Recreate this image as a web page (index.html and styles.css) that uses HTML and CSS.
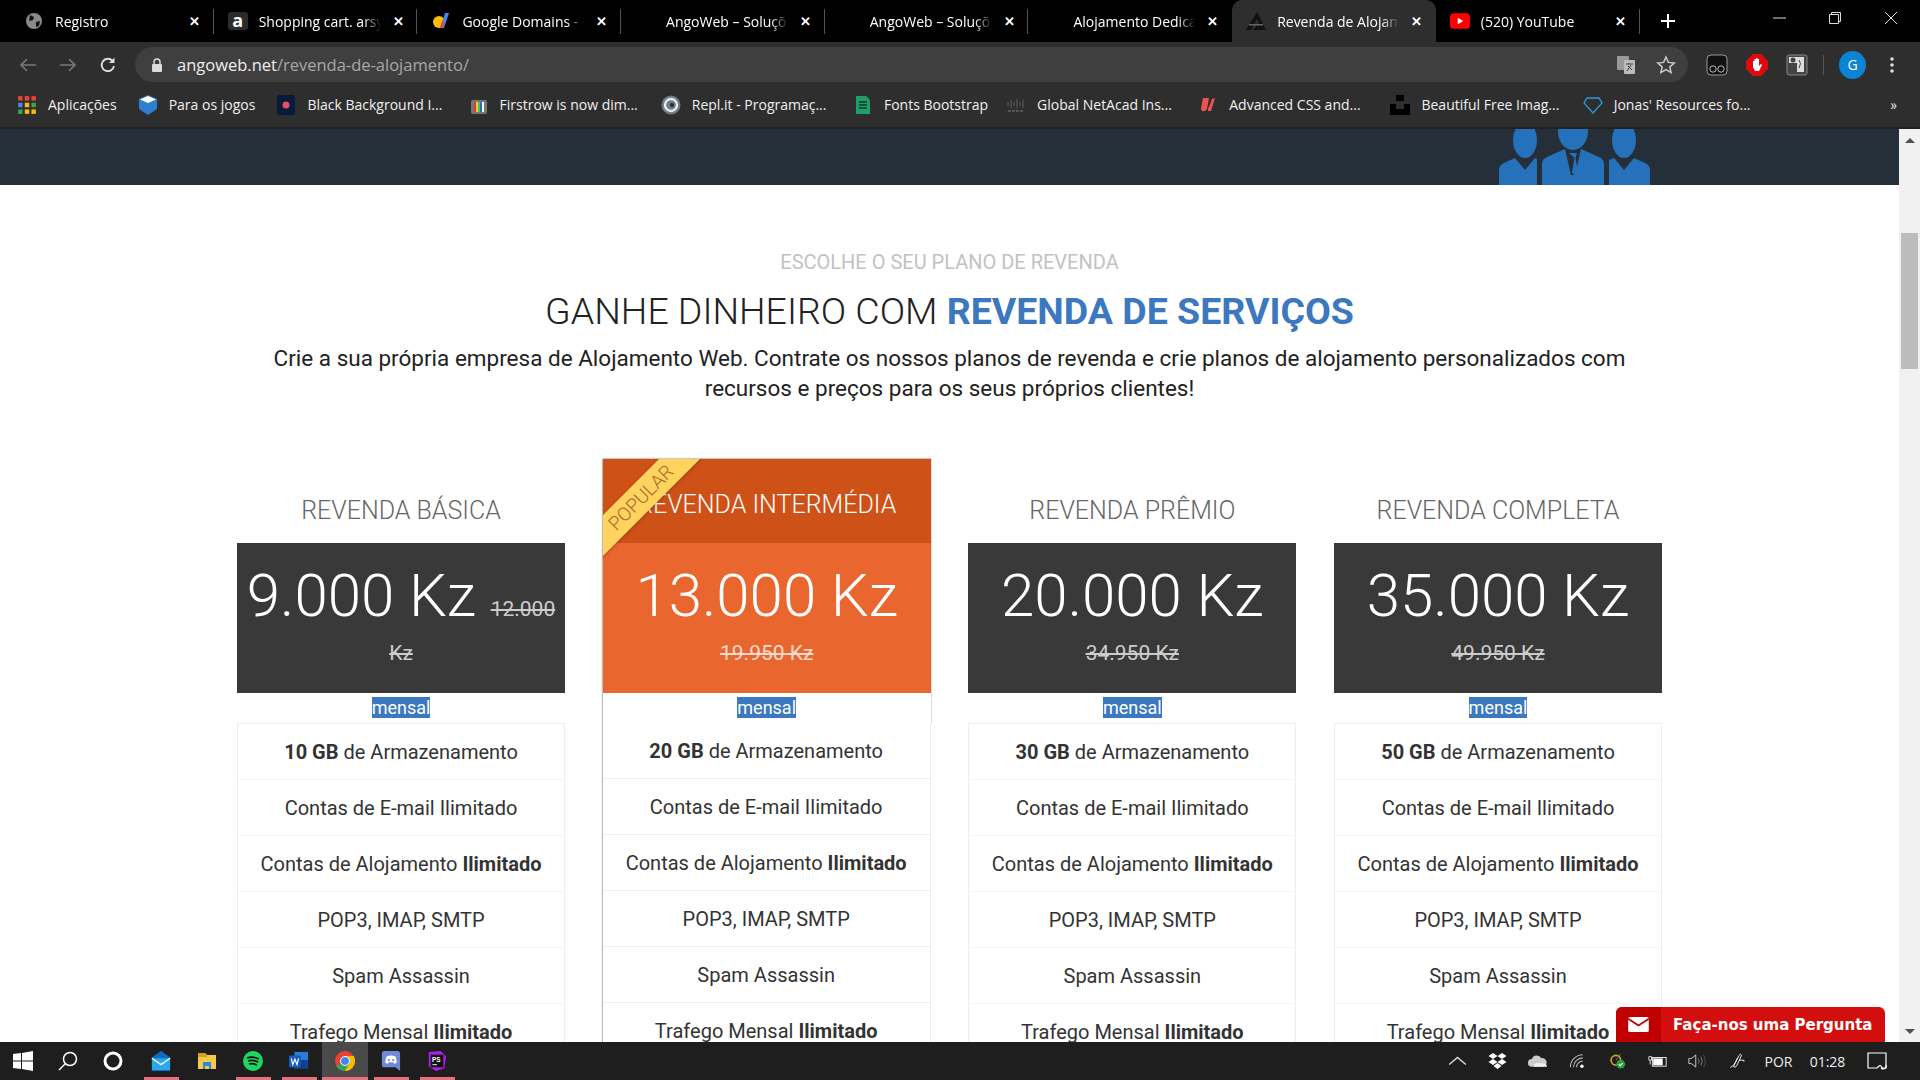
FILE: index.html
```html
<!DOCTYPE html>
<html lang="pt">
<head>
    <meta charset="UTF-8">
    <title>Revenda de Alojamento - AngoWeb</title>
    <link rel="stylesheet" href="styles.css">
</head>
<body>
    <div class="tabstrip">
        <div class="tab">
            <svg class="tab-icon" viewBox="0 0 18 18"><circle cx="9" cy="9" r="8" fill="#8a8a8a"/><path d="M5 3l4 2-1 3-4 1zM11 10l4-1-1 5-3 1z" fill="#111"/></svg>
            <span class="tab-title">Registro</span><span class="tab-close">✕</span>
        </div>
        <div class="tab">
            <span class="tab-icon fav-a">a</span>
            <span class="tab-title">Shopping cart. arsyad</span><span class="tab-close">✕</span>
        </div>
        <div class="tab">
            <svg class="tab-icon" viewBox="0 0 18 18"><circle cx="7" cy="10" r="6" fill="#fbbc04"/><path d="M8 16L13 1h4l-5 15z" fill="#4285f4"/><path d="M8 16l2.500-8 1.500 3-1 5z" fill="#ea4335"/></svg>
            <span class="tab-title">Google Domains - Go</span><span class="tab-close">✕</span>
        </div>
        <div class="tab">
            <span class="tab-icon"></span>
            <span class="tab-title">AngoWeb – Soluções</span><span class="tab-close">✕</span>
        </div>
        <div class="tab">
            <span class="tab-icon"></span>
            <span class="tab-title">AngoWeb – Soluções</span><span class="tab-close">✕</span>
        </div>
        <div class="tab tab-before-active">
            <span class="tab-icon"></span>
            <span class="tab-title">Alojamento Dedicado</span><span class="tab-close">✕</span>
        </div>
        <div class="tab tab-active">
            <svg class="tab-icon" viewBox="0 0 20 18"><path d="M11 0L0 18h5L11 7l2 4-6 7h13z" fill="#111"/><path d="M3 12h14v1.500H3z" fill="#666"/></svg>
            <span class="tab-title">Revenda de Alojamento</span><span class="tab-close">✕</span>
        </div>
        <div class="tab">
            <svg class="tab-icon" viewBox="0 0 18 14"><rect width="18" height="14" rx="3.500" fill="#f00"/><path d="M7 4l5 3-5 3z" fill="#fff"/></svg>
            <span class="tab-title">(520) YouTube</span><span class="tab-close">✕</span>
        </div>
        <svg class="new-tab" viewBox="0 0 16 16"><path d="M8 1v14M1 8h14" stroke="#fff" stroke-width="2"/></svg>
        <div class="window-buttons">
            <svg viewBox="0 0 14 14"><path d="M1 7h13" stroke="#ddd"/></svg>
            <svg viewBox="0 0 14 14"><path d="M1.500 3.500h9v9h-9zM3.500 3.500v-2h9v9h-2" fill="none" stroke="#ddd"/></svg>
            <svg viewBox="0 0 14 14"><path d="M1 1l12 12M13 1L1 13" stroke="#ddd"/></svg>
        </div>
    </div>

    <div class="toolbar">
        <svg class="nav-icon" viewBox="0 0 18 18"><path d="M17 9H2M8 3L2 9l6 6" fill="none" stroke="#777" stroke-width="1.600"/></svg>
        <svg class="nav-icon" viewBox="0 0 18 18"><path d="M1 9h15M10 3l6 6-6 6" fill="none" stroke="#777" stroke-width="1.600"/></svg>
        <svg class="nav-icon" viewBox="0 0 18 18"><path d="M15 10a6.200 6.200 0 1 1-1.500-5.200" fill="none" stroke="#ddd" stroke-width="1.800"/><path d="M15.500 1.500v5.500H10z" fill="#ddd"/></svg>
        <div class="omnibox">
            <svg class="lock" viewBox="0 0 12 14"><path d="M3 6V4a3 3 0 0 1 6 0v2" fill="none" stroke="#ddd" stroke-width="1.400"/><rect x="1" y="6" width="10" height="8" rx="1" fill="#ddd"/></svg>
            <span class="url"><b>angoweb.net</b>/revenda-de-alojamento/</span>
            <svg class="omni-icon" viewBox="0 0 20 20"><rect x="1" y="1" width="12" height="14" rx="1" fill="#999"/><rect x="8" y="5" width="11" height="14" rx="1" fill="#bbb"/><path d="M10 9h7M13 8v1M11 16l4-6M12 11l4 4" stroke="#444" fill="none"/></svg>
            <svg class="omni-icon omni-star" viewBox="0 0 20 20"><path d="M10 2l2.400 5.400 5.800.6-4.400 3.900 1.300 5.700L10 14.700l-5.100 2.900 1.300-5.700L1.800 8l5.800-.6z" fill="none" stroke="#ccc" stroke-width="1.500"/></svg>
        </div>
        <svg class="ext" viewBox="0 0 22 22"><rect x="1" y="1" width="20" height="20" rx="4" fill="#111" stroke="#999"/><circle cx="7" cy="15" r="3.200" fill="none" stroke="#bbb"/><circle cx="15" cy="15" r="3.200" fill="none" stroke="#bbb"/></svg>
        <svg class="ext" viewBox="0 0 22 22"><path d="M7 0h8l7 7v8l-7 7H7l-7-7V7z" fill="#e2090d"/><path d="M7 13V7h1.500v4V5h1.500v6V4h1.500v7V5H13v7l2-2 1 1-3 6H9z" fill="#fff"/></svg>
        <svg class="ext" viewBox="0 0 22 22"><rect x="1" y="1" width="20" height="20" rx="2" fill="#444" stroke="#888"/><path d="M3 3h15v15h-7V9H3z" fill="#ddd"/><circle cx="7" cy="6" r="2.500" fill="#444"/><path d="M13 6q3 3 0 8" fill="none" stroke="#444"/></svg>
        <span class="toolbar-sep"></span>
        <span class="avatar">G</span>
        <svg class="kebab" viewBox="0 0 4 18"><circle cx="2" cy="3" r="1.800" fill="#ddd"/><circle cx="2" cy="9" r="1.800" fill="#ddd"/><circle cx="2" cy="15" r="1.800" fill="#ddd"/></svg>
    </div>

    <div class="bookmarks">
        <a class="bm">
            <svg viewBox="0 0 18 18"><path d="M1 1h4v4H1z" fill="#ea4335"/><path d="M7 1h4v4H7z" fill="#ea4335"/><path d="M13 1h4v4h-4z" fill="#ea4335"/><path d="M1 7h4v4H1z" fill="#4285f4"/><path d="M7 7h4v4H7z" fill="#fbbc04"/><path d="M13 7h4v4h-4z" fill="#34a853"/><path d="M1 13h4v4H1z" fill="#34a853"/><path d="M7 13h4v4H7z" fill="#fbbc04"/><path d="M13 13h4v4h-4z" fill="#fbbc04"/></svg>
            Aplicações
        </a>
        <a class="bm">
            <svg viewBox="0 0 20 20"><path d="M10 0l9 4v10l-9 6-9-6V4z" fill="#2f7fd1"/><path d="M10 1l8 3.500-8 3.500-8-3.500z" fill="#fff"/></svg>
            Para os jogos
        </a>
        <a class="bm bm-long">
            <svg viewBox="0 0 20 20"><rect x="1" y="0" width="18" height="20" rx="2" fill="#0a1a3a"/><circle cx="10" cy="10" r="3.500" fill="#e8506a"/></svg>
            Black Background I...
        </a>
        <a class="bm bm-long">
            <svg viewBox="0 0 20 20"><rect x="2" y="5" width="16" height="14" rx="2" fill="#777"/><path d="M5 7h2v10H5z" fill="#e33"/><path d="M7 7h2v10H7z" fill="#fc3"/><path d="M9 7h2v10H9z" fill="#3c6"/><path d="M11 7h2v10h-2z" fill="#36c"/><path d="M13 7h2v10h-2z" fill="#fff"/></svg>
            Firstrow is now dim...
        </a>
        <a class="bm bm-long">
            <svg viewBox="0 0 20 20"><circle cx="10" cy="10" r="9.500" fill="#6f7c85"/><circle cx="10" cy="10" r="6" fill="none" stroke="#e8ecef" stroke-width="2.400"/><circle cx="11" cy="10" r="2" fill="#2a2a2a"/></svg>
            Repl.it - Programaç...
        </a>
        <a class="bm bm-tight">
            <svg viewBox="0 0 20 20"><path d="M3 1h10l4 4v14H3z" fill="#1f9d6b"/><path d="M6 7h8M6 10h8M6 13h8" stroke="#0d3b2a" stroke-width="1.500"/></svg>
            Fonts Bootstrap
        </a>
        <a class="bm bm-long">
            <svg viewBox="0 0 20 20"><path d="M2 7v4M5 5v8M8 7v4M11 4v9M14 7v4M17 5v8" stroke="#555" stroke-width="1.300"/><path d="M2 16h16" stroke="#555" stroke-width="2" stroke-dasharray="3 1"/></svg>
            Global NetAcad Ins...
        </a>
        <a class="bm bm-long">
            <svg viewBox="0 0 20 20"><path d="M5 3L3 13q0 4 4 3l3-3 0 3h3l4-13-3 1-3 8-2 2 2-11z" fill="#ec5252"/></svg>
            Advanced CSS and...
        </a>
        <a class="bm bm-long">
            <svg viewBox="0 0 20 20"><path d="M6 0h8v6H6zM0 9h6v5h8V9h6v11H0z" fill="#000"/></svg>
            Beautiful Free Imag...
        </a>
        <a class="bm bm-long">
            <svg viewBox="0 0 20 20"><path d="M4 3h12l3 5-9 10L1 8z" fill="none" stroke="#2d9cdb" stroke-width="1.300"/></svg>
            Jonas' Resources fo...
        </a>
        <span class="bm-more">»</span>
    </div>
    <div class="chrome-line"></div>

    <div class="viewport">
        <main class="page">
            <div class="hero">
                <svg class="hero-people" viewBox="0 0 152 56">
                    <ellipse cx="26" cy="11" rx="12" ry="18" fill="#2671bc"/>
                    <path d="M0 56V41q0-5 5-7l11-5 10 12 10-12 2 1v26z" fill="#2671bc"/>
                    <ellipse cx="74" cy="2" rx="15" ry="19" fill="#2671bc"/>
                    <path d="M43 56V35q0-5 5-7l18-8 6 26h4l6-26 18 8q5 2 5 7v21z" fill="#2671bc"/>
                    <path d="M70 24h8l-1.500 5 2.500 14-3 4-3-4 2.500-14z" fill="#2671bc"/>
                    <ellipse cx="125" cy="11" rx="12" ry="18" fill="#2671bc"/>
                    <path d="M110 56V31l5-2 10 12 10-12 11 5q5 2 5 7v15z" fill="#2671bc"/>
                </svg>
            </div>

            <section class="pricing">
                <p class="kicker">ESCOLHE O SEU PLANO DE REVENDA</p>
                <h2 class="heading">GANHE DINHEIRO COM <strong>REVENDA DE SERVIÇOS</strong></h2>
                <p class="lead">Crie a sua própria empresa de Alojamento Web. Contrate os nossos planos de revenda e crie planos de alojamento personalizados com recursos e preços para os seus próprios clientes!</p>

                <div class="plans">
                    <article class="plan">
                        <h3 class="plan-title">REVENDA BÁSICA</h3>
                        <div class="plan-price"><span class="now">9.000 Kz </span><s>12.000 Kz</s></div>
                        <div class="plan-period"><span>mensal</span></div>
                        <ul class="plan-list">
                            <li><b>10 GB</b> de Armazenamento</li>
                            <li>Contas de E-mail Ilimitado</li>
                            <li>Contas de Alojamento <b>Ilimitado</b></li>
                            <li>POP3, IMAP, SMTP</li>
                            <li>Spam Assassin</li>
                            <li>Trafego Mensal <b>Ilimitado</b></li>
                        </ul>
                    </article>
                    <article class="plan plan-popular">
                        <h3 class="plan-title">REVENDA INTERMÉDIA</h3>
                        <div class="ribbon"><span>POPULAR</span></div>
                        <div class="plan-price"><span class="now">13.000 Kz </span><s>19.950 Kz</s></div>
                        <div class="plan-period"><span>mensal</span></div>
                        <ul class="plan-list">
                            <li><b>20 GB</b> de Armazenamento</li>
                            <li>Contas de E-mail Ilimitado</li>
                            <li>Contas de Alojamento <b>Ilimitado</b></li>
                            <li>POP3, IMAP, SMTP</li>
                            <li>Spam Assassin</li>
                            <li>Trafego Mensal <b>Ilimitado</b></li>
                        </ul>
                    </article>
                    <article class="plan">
                        <h3 class="plan-title">REVENDA PRÊMIO</h3>
                        <div class="plan-price"><span class="now">20.000 Kz </span><s>34.950 Kz</s></div>
                        <div class="plan-period"><span>mensal</span></div>
                        <ul class="plan-list">
                            <li><b>30 GB</b> de Armazenamento</li>
                            <li>Contas de E-mail Ilimitado</li>
                            <li>Contas de Alojamento <b>Ilimitado</b></li>
                            <li>POP3, IMAP, SMTP</li>
                            <li>Spam Assassin</li>
                            <li>Trafego Mensal <b>Ilimitado</b></li>
                        </ul>
                    </article>
                    <article class="plan">
                        <h3 class="plan-title">REVENDA COMPLETA</h3>
                        <div class="plan-price"><span class="now">35.000 Kz </span><s>49.950 Kz</s></div>
                        <div class="plan-period"><span>mensal</span></div>
                        <ul class="plan-list">
                            <li><b>50 GB</b> de Armazenamento</li>
                            <li>Contas de E-mail Ilimitado</li>
                            <li>Contas de Alojamento <b>Ilimitado</b></li>
                            <li>POP3, IMAP, SMTP</li>
                            <li>Spam Assassin</li>
                            <li>Trafego Mensal <b>Ilimitado</b></li>
                        </ul>
                    </article>
                </div>
            </section>

            <a class="ask">
                <span class="ask-icon"><svg viewBox="0 0 22 16"><rect width="22" height="16" rx="2" fill="#fff"/><path d="M0 2l11 7 11-7" fill="none" stroke="#c00000" stroke-width="2"/></svg></span>
                <span class="ask-text">Faça-nos uma Pergunta</span>
            </a>
        </main>
        <div class="scrollbar">
            <span class="arrow-up"></span>
            <span class="thumb"></span>
            <span class="arrow-down"></span>
        </div>
    </div>

    <footer class="taskbar">
        <div class="task start"><svg viewBox="0 0 20 20"><path d="M0 3l8-1v7.500H0zM9 2l11-2v9.500H9zM0 10.500h8V18l-8-1zM9 10.500h11V20L9 18z" fill="#fff"/></svg></div>
        <div class="task"><svg viewBox="0 0 20 20"><circle cx="12" cy="8" r="6.500" fill="none" stroke="#fff" stroke-width="1.500"/><path d="M7.500 12.500L1 19" stroke="#fff" stroke-width="1.500"/></svg></div>
        <div class="task"><svg viewBox="0 0 20 20"><circle cx="10" cy="10" r="8" fill="none" stroke="#fff" stroke-width="3"/></svg></div>
        <div class="task task-first-app running"><svg viewBox="0 0 22 22"><path d="M11 0l10 7v15H1V7z" fill="#0f6cbd"/><path d="M1 8h20v13H1z" fill="#29a9eb"/><path d="M1 8l10 7 10-7" fill="none" stroke="#fff" stroke-width="1.500"/></svg></div>
        <div class="task"><svg viewBox="0 0 20 20"><path d="M1 2h7l2 2h9v14H1z" fill="#f7c948"/><path d="M1 2h7l2 2v2H1z" fill="#d69e1e"/><path d="M6 11h8v7h-2v-3H8v3H6z" fill="#2b88d8"/></svg></div>
        <div class="task running"><svg viewBox="0 0 20 20"><circle cx="10" cy="10" r="10" fill="#1ed760"/><path d="M4 7q6-2 12 1M5 10q5-1.500 10 1M6 13q4-1 8 1" fill="none" stroke="#111" stroke-width="1.800"/></svg></div>
        <div class="task running"><svg viewBox="0 0 22 20"><path d="M6 0h15v18H6z" fill="#2b7cd3"/><path d="M6 9h15v9H6z" fill="#103f91"/><rect x="0" y="4" width="13" height="13" fill="#185abd"/><path d="M2.500 7l1.700 7 2.300-6 2.300 6L10.500 7" fill="none" stroke="#fff" stroke-width="1.300"/></svg></div>
        <div class="task task-active running"><svg viewBox="0 0 20 20"><circle cx="10" cy="10" r="10" fill="#ea4335"/><path d="M10 10L1.300 15A10 10 0 0 0 10 20l5-9z" fill="#34a853"/><path d="M10 5h8.700A10 10 0 0 1 10 20l5-9z" fill="#fbbc04"/><circle cx="10" cy="10" r="4.500" fill="#4285f4" stroke="#fff"/></svg></div>
        <div class="task running"><svg viewBox="0 0 20 22"><path d="M3 0h14a3 3 0 0 1 3 3v19l-5-4H3a3 3 0 0 1-3-3V3a3 3 0 0 1 3-3z" fill="#7289da"/><path d="M5 6q5-2 10 0l1.500 6q-1 1.500-3 2l-1-1.500h-5l-1 1.500q-2-.5-3-2z" fill="#fff"/><circle cx="7.700" cy="10" r="1.200" fill="#7289da"/><circle cx="12.300" cy="10" r="1.200" fill="#7289da"/></svg></div>
        <div class="task running"><svg viewBox="0 0 22 22"><path d="M2 1l13-1 6 6-2 13-9 3-8-5z" fill="#af1df5"/><rect x="4" y="4" width="14" height="14" fill="#111"/><text x="5.500" y="12" class="ps-mark">PS</text><path d="M6 15h5" stroke="#fff"/></svg></div>

        <div class="tray">
            <span class="tray-cell"><svg viewBox="0 0 16 8"><path d="M1 7l7-6 7 6" fill="none" stroke="#ddd" stroke-width="1.200"/></svg></span>
            <span class="tray-cell"><svg viewBox="0 0 18 16"><path d="M4.500 0L0 3l4.500 3L9 3zM13.500 0L9 3l4.500 3L18 3zM4.500 6L0 9l4.500 3L9 9zM13.500 6L9 9l4.500 3L18 9zM9 10l-4 3 4 3 4-3z" fill="#fff"/></svg></span>
            <span class="tray-cell"><svg viewBox="0 0 20 12"><path d="M4 12a4 4 0 0 1 0-8 5.500 5.500 0 0 1 10-1 4.500 4.500 0 0 1 2 9z" fill="#ccc"/><path d="M6 12q0-4 4-4t8 1q2 1 2 3z" fill="#eee"/></svg></span>
            <span class="tray-cell"><svg viewBox="0 0 18 18"><path d="M1 16a14 14 0 0 1 14-14M4.500 16A10.500 10.500 0 0 1 15 5.500M8 16a7 7 0 0 1 7-7" fill="none" stroke="#bbb" stroke-width="1.200"/><circle cx="14" cy="15" r="2" fill="#fff"/></svg></span>
            <span class="tray-cell"><svg viewBox="0 0 20 20"><circle cx="8" cy="9" r="6" fill="none" stroke="#d9a520" stroke-width="2"/><circle cx="14" cy="14" r="5.500" fill="#2e9e3e"/><path d="M11.500 14l2 2 3-3.500" fill="none" stroke="#fff" stroke-width="1.400"/><path d="M8 9l6-8" stroke="#888"/></svg></span>
            <span class="tray-cell"><svg viewBox="0 0 22 14"><rect x="5" y="3" width="16" height="10" fill="none" stroke="#fff"/><rect x="6" y="4" width="11" height="8" fill="#fff"/><path d="M1 2v4h3V2zM2.500 6v5" stroke="#fff"/></svg></span>
            <span class="tray-cell"><svg viewBox="0 0 22 18"><path d="M1 6h3l5-4v14l-5-4H1z" fill="none" stroke="#ddd"/><path d="M12 6q2 3 0 6M15 4q3 5 0 10" fill="none" stroke="#888"/><path d="M18 2q4 7 0 14" fill="none" stroke="#555"/></svg></span>
            <span class="tray-cell"><svg viewBox="0 0 20 20"><path d="M1 18q4-1 7-7l4-8q2-3 3 0l-6 13q-2 3-4 1l5-11 M12 9h6v2" fill="none" stroke="#eee" stroke-width="1.200"/></svg></span>
            <span class="tray-lang">POR</span>
            <span class="tray-time">01:28</span>
            <span class="tray-notif"><svg viewBox="0 0 20 18"><path d="M1 1h18v15h-4q-1-4-4-1l-1 1H1z" fill="none" stroke="#fff" stroke-width="1.200"/><path d="M14 16a3 3 0 0 0 5-3" fill="none" stroke="#fff" stroke-width="1.200"/></svg></span>
        </div>
    </footer>
</body>
</html>
```

FILE: styles.css
```css
* {
    box-sizing: border-box;
}
html, body {
    height: 100%;
}
body {
    margin: 0;
    display: flex;
    flex-direction: column;
    overflow: hidden;
    font-family: Roboto, "Liberation Sans", sans-serif;
    background: #fff;
}

/* browser chrome */
.tabstrip {
    height: 42px;
    flex: none;
    display: flex;
    align-items: center;
    padding-left: 10px;
    background: #000;
}
.tab {
    width: 203.7px;
    height: 42px;
    flex: none;
    display: flex;
    align-items: center;
    padding-left: 14px;
    position: relative;
    color: #fff;
    font: 14px "Open Sans", sans-serif;
}
.tab::after {
    content: "";
    position: absolute;
    right: 0;
    top: 9px;
    height: 25px;
    width: 1px;
    background: #555;
}
.tab-before-active::after, .tab-active::after {
    display: none;
}
.tab-active {
    background: #2e2e2e;
    border-radius: 10px 10px 0 0;
}
.tab-icon {
    width: 20px;
    height: 18px;
    flex: none;
}
.fav-a {
    display: block;
    background: #2b2b2b;
    border-radius: 3px;
    font: 700 18px/16px "Open Sans", sans-serif;
    text-align: center;
}
.tab-title {
    width: 122px;
    margin-left: 11px;
    flex: none;
    overflow: hidden;
    white-space: nowrap;
    -webkit-mask-image: linear-gradient(to right, #000 86%, transparent);
}
.tab-close {
    margin-left: 12px;
    font-size: 13px;
    font-weight: 700;
}
.new-tab {
    width: 16px;
    height: 16px;
    margin-left: 20px;
}
.window-buttons {
    margin-left: auto;
    display: flex;
    align-items: center;
    gap: 42px;
    padding: 0 22px 6px 0;
}
.window-buttons svg {
    width: 14px;
    height: 14px;
}

.toolbar {
    height: 45px;
    flex: none;
    display: flex;
    align-items: center;
    padding: 0 0 0 19px;
    background: #2e2e2e;
}
.nav-icon {
    width: 18px;
    height: 18px;
    margin-right: 22px;
}
.omnibox {
    width: 1553px;
    height: 35px;
    margin-left: -4px;
    display: flex;
    align-items: center;
    padding: 0 12px 0 16px;
    border-radius: 18px;
    background: #3f3f3f;
}
.lock {
    width: 12px;
    height: 14px;
}
.url {
    margin-left: 14px;
    color: #a8a8a8;
    font: 16.5px "Open Sans", sans-serif;
}
.url b {
    font-weight: 400;
    color: #eee;
}
.omni-icon {
    width: 20px;
    height: 20px;
    margin-left: auto;
}
.omni-star {
    margin-left: 20px;
}
.ext {
    width: 22px;
    height: 22px;
    margin-left: 18px;
}
.omnibox + .ext {
    margin-left: 18px;
}
.toolbar-sep {
    width: 1px;
    height: 20px;
    margin: 0 15px 0 15px;
    background: #555;
}
.avatar {
    width: 27px;
    height: 28px;
    border-radius: 50%;
    background: #0b84d4;
    color: #fff;
    font: 14px/28px "Open Sans", sans-serif;
    text-align: center;
}
.kebab {
    width: 4px;
    height: 18px;
    margin-left: 24px;
}

.bookmarks {
    height: 40px;
    flex: none;
    display: flex;
    align-items: center;
    padding: 0 0 5px 17px;
    background: #2e2e2e;
}
.bm {
    display: flex;
    align-items: center;
    margin-right: 21px;
    color: #f0f0f0;
    font: 14px "Open Sans", sans-serif;
    white-space: nowrap;
}
.bm-long {
    width: 192.2px;
    margin-right: 0;
}
.bm-tight {
    margin-right: 18px;
}
.bm svg {
    width: 20px;
    height: 20px;
    margin-right: 11px;
    flex: none;
}
.bm-more {
    margin-left: auto;
    padding-right: 23px;
    color: #ddd;
    font-size: 15px;
}
.chrome-line {
    height: 2px;
    flex: none;
    background: #222;
}

/* page */
.viewport {
    flex: 1;
    min-height: 0;
    display: flex;
}
.page {
    flex: 1;
    min-width: 0;
    overflow: hidden;
    position: relative;
}
.hero {
    height: 56px;
    padding-left: 1499px;
    background: #242f39;
}
.hero-people {
    display: block;
    width: 152px;
    height: 56px;
}
.pricing {
    text-align: center;
    padding-top: 66px;
}
.kicker {
    margin: 0;
    color: #c2c2c2;
    font-size: 20px;
    line-height: 22px;
}
.heading {
    margin: 16px 0 0;
    color: #222;
    font-size: 37.5px;
    line-height: 44px;
    font-weight: 300;
}
.heading strong {
    font-weight: 700;
    color: #3b78c0;
}
.lead {
    width: 1380px;
    margin: 9.5px auto 0;
    color: #222;
    font-size: 22.5px;
    line-height: 30px;
}
.plans {
    margin-top: 56px;
    display: grid;
    grid-template-columns: repeat(4, 328px);
    column-gap: 37.67px;
    justify-content: center;
}
.plan {
    position: relative;
}
.plan-title {
    height: 84px;
    margin: 0;
    padding-top: 36px;
    color: #666;
    font-size: 25px;
    line-height: 32px;
    font-weight: 300;
}
.plan-price {
    height: 150px;
    padding: 8px 6px 0;
    background: #393939;
    color: #ccc;
    font-size: 21px;
    line-height: 26px;
}
.now {
    color: #fff;
    font-size: 60px;
    line-height: 89px;
    font-weight: 300;
}
.plan-period {
    height: 30px;
    padding-top: 4px;
    font-size: 18px;
    line-height: 21px;
}
.plan-period span {
    display: inline-block;
    background: #3b78c0;
    color: #fff;
}
.plan-list {
    margin: 0;
    padding: 0;
    list-style: none;
    border: 1px solid #eee;
    border-bottom: 0;
}
.plan-list li {
    height: 56px;
    border-bottom: 1px solid #f6f6f6;
    color: #333;
    font-size: 20px;
    line-height: 57px;
}
.plan-list b {
    font-weight: 700;
}
.plan-popular {
    box-shadow: -1px 0 1px #bbb, 1px 0 0 #ddd, 0 -1px 1px #ccc;
}
.plan-popular .plan-title {
    padding-top: 30px;
    background: #ce5118;
    color: #fff;
}
.plan-popular .plan-price {
    background: #e9672e;
    color: #f4d9cc;
}
.plan-popular .plan-list {
    border-top: 0;
    border-left: 0;
    border-right: 1px solid #eee;
    background: #fff;
    box-shadow: 2px 0 0 #fff;
}
.plan-popular .plan-list li {
    border-bottom-color: #eee;
}
.ribbon {
    position: absolute;
    left: 0;
    top: 0;
    width: 100px;
    height: 100px;
    overflow: hidden;
}
.ribbon span {
    position: absolute;
    left: -47px;
    top: 24px;
    width: 170px;
    height: 29px;
    background: #ffd45e;
    box-shadow: 0 1px 3px rgba(0, 0, 0, 0.25);
    color: #a8682a;
    font-size: 19px;
    line-height: 29px;
    text-align: center;
    transform: rotate(-45deg);
    font-weight: 300;
}

.ask {
    position: absolute;
    right: 14px;
    bottom: 0;
    width: 269px;
    height: 35px;
    display: flex;
    align-items: center;
    border-radius: 6px 6px 0 0;
    overflow: hidden;
    background: #d30e0e;
    color: #fff;
    font: 700 15px "DejaVu Sans", sans-serif;
}
.ask-icon {
    width: 45px;
    height: 35px;
    flex: none;
    display: flex;
    align-items: center;
    justify-content: center;
    background: #c00000;
}
.ask-icon svg {
    width: 21px;
    height: 15px;
}
.ask-text {
    margin-left: 12px;
    white-space: nowrap;
}

.scrollbar {
    width: 21px;
    flex: none;
    display: flex;
    flex-direction: column;
    align-items: center;
    background: #f1f1f1;
}
.arrow-up {
    margin-top: 9px;
    border: 5px solid transparent;
    border-top: 0;
    border-bottom-color: #505050;
}
.arrow-down {
    margin-top: auto;
    margin-bottom: 8px;
    border: 5px solid transparent;
    border-bottom: 0;
    border-top-color: #505050;
}
.thumb {
    width: 17px;
    height: 136px;
    margin-top: 90px;
    background: #bcbcbc;
}

/* windows taskbar */
.taskbar {
    height: 38px;
    flex: none;
    display: flex;
    background: #1e1e1e;
    color: #eee;
}
.task {
    width: 46px;
    height: 38px;
    display: flex;
    align-items: center;
    justify-content: center;
    position: relative;
    flex: none;
}
.task svg {
    width: 20px;
    height: 20px;
}
.start, .start + .task, .start + .task + .task {
    width: 45px;
}
.task-first-app {
    margin-left: 3px;
}
.running::after {
    content: "";
    position: absolute;
    left: 6px;
    right: 5px;
    bottom: 0;
    height: 3px;
    background: #e8707c;
}
.task-active {
    background: #4a4a4a;
}
.task-active::after {
    left: 0;
    right: 0;
}
.ps-mark {
    fill: #fff;
    font: 700 7px "Liberation Sans", sans-serif;
}
.tray {
    margin-left: auto;
    display: flex;
    align-items: center;
    padding-right: 21px;
    font: 14px "Open Sans", sans-serif;
}
.tray-cell {
    width: 40px;
    display: flex;
    justify-content: center;
}
.tray-cell svg {
    width: 19px;
    height: 16px;
}
.tray-lang {
    width: 43px;
    text-align: center;
}
.tray-time {
    width: 55px;
    text-align: center;
}
.tray-notif {
    width: 44px;
    display: flex;
    justify-content: center;
}
.tray-notif svg {
    width: 20px;
    height: 18px;
}
```
